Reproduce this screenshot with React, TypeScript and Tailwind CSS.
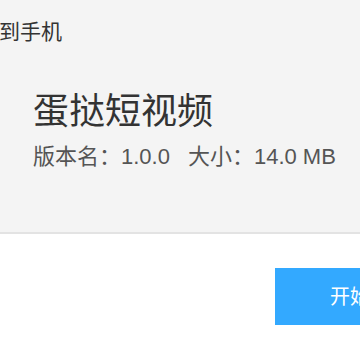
import React from "react";

const App = () => {
  return (
    <div className="w-[360px] h-[360px] overflow-hidden bg-white font-['Liberation_Sans','Noto_Sans_CJK_SC',sans-serif]">
      {/* 应用信息 */}
      <div className="h-[234px] bg-[#f4f4f4] border-b-2 border-[#e3e3e3]">
        <div className="h-[64px] flex items-center -ml-[1px] text-[21px] text-[#333]">到手机</div>
        <div className="pl-[33px] pt-[26px]">
          <div className="text-[36px] leading-[44px] text-[#333]">蛋挞短视频</div>
          <div className="mt-[9px] flex text-[22px] leading-[28px] text-[#555]">
            <span>版本名：1.0.0</span>
            <span className="ml-[18px]">大小：14.0 MB</span>
          </div>
        </div>
      </div>
      {/* 下载按钮 */}
      <div className="pt-[34px] pl-[275px]">
        <button className="h-[57px] w-[190px] shrink-0 bg-[#33a9ff] text-white text-[20px] pl-[55px] text-left whitespace-nowrap">
          开始下载
        </button>
      </div>
    </div>
  );
};

export default App;
